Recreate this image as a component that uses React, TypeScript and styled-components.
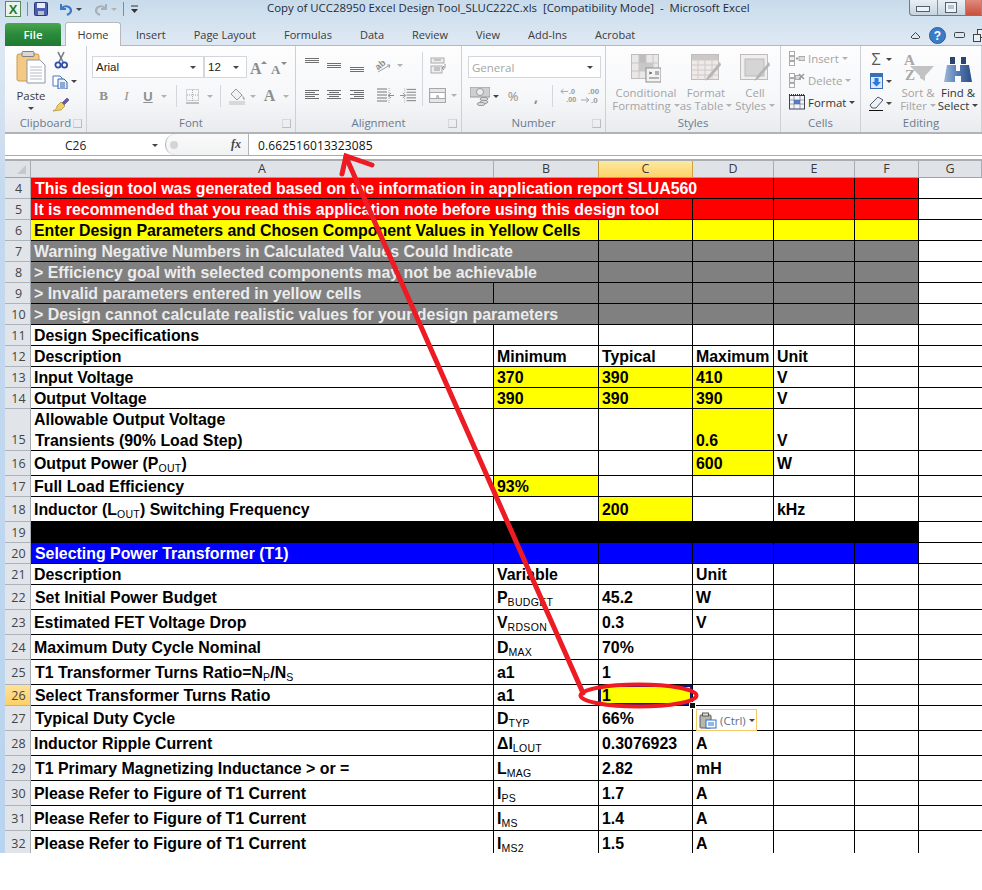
import React from 'react';
import styled, { createGlobalStyle } from 'styled-components';

const UI_FONT = '"Open Sans", "Noto Sans", sans-serif';
const COLS = '26px 463px 105px 94px 81px 81px 64px 1fr';

const GlobalStyle = createGlobalStyle`
  html, body { margin: 0; padding: 0; background: #fff; }
  #root { width: 982px; height: 890px; overflow: hidden; }
`;

const Page = styled.div`
  position: relative;
  width: 982px;
  height: 890px;
  background: #fff;
  font-family: ${UI_FONT};
`;

const Window = styled.div`
  height: 853px;
  overflow: hidden;
  background: linear-gradient(180deg, #c8dbeb 0, #dde8f3 40px, #c4d9ee 200px, #b9d4f0 100%);
`;

/* title bar */
const TitleBar = styled.div`
  display: flex;
  align-items: flex-start;
  height: 22px;
  padding-left: 5px;
`;
const Qat = styled.div`
  display: flex;
  align-items: center;
  width: 262px;
  height: 18px;
  gap: 3px;
`;
const QatSep = styled.span`
  width: 1px;
  height: 14px;
  margin: 0 3px;
  background: #7f8c99;
`;
const Title = styled.div`
  font-size: 11.4px;
  line-height: 16px;
  color: #1e2a38;
  white-space: pre;
`;
const WinControls = styled.div`
  display: flex;
  margin-left: auto;
  margin-top: -1px;
  width: 72px;
  height: 15px;
  border: 1px solid #6d7a88;
  border-right: 0;
  border-radius: 0 0 0 4px;
  background: linear-gradient(180deg, #e9eff5, #c5d3e0);
`;
const WinBtn = styled.div<{ $close?: boolean }>`
  display: flex;
  align-items: center;
  justify-content: center;
  width: ${p => (p.$close ? '16px' : '28px')};
  border-right: 1px solid #8593a1;
  background: ${p => (p.$close ? 'linear-gradient(180deg,#e08a7c,#c9503e)' : 'transparent')};
`;

/* tabs */
const TabBar = styled.div`
  display: flex;
  align-items: flex-end;
  height: 24px;
  padding-left: 5px;
  margin-bottom: -1px;
  position: relative;
  z-index: 1;
`;
const FileTab = styled.div`
  width: 56px;
  height: 23px;
  line-height: 23px;
  text-align: center;
  color: #fff;
  font-size: 11.5px;
  font-weight: 600;
  border-radius: 3px 3px 0 0;
  background: linear-gradient(180deg, #4aa64e 0, #2a8a3a 50%, #1e7a30 100%);
  margin-right: 4px;
`;
const Tab = styled.div<{ $active?: boolean }>`
  height: 23px;
  line-height: 23px;
  padding: 0 14px;
  font-size: 11px;
  white-space: nowrap;
  color: #3b3b3b;
  box-sizing: border-box;
  ${p => p.$active && `
    width: 56px;
    height: 24px;
    padding: 0;
    text-align: center;
    margin-right: 1px;
    background: linear-gradient(180deg, #fff, #fbfcfd);
    border: 1px solid #b5b9be;
    border-bottom: 0;
    border-radius: 3px 3px 0 0;
  `}
`;
const TabTools = styled.div`
  display: flex;
  align-items: center;
  gap: 8px;
  margin-left: auto;
  height: 22px;
  margin-right: -2px;
`;

/* ribbon */
const Body = styled.div`
  margin-left: 5px;
  background: #fff;
`;
const Ribbon = styled.div`
  display: flex;
  height: 86px;
  border-top: 1px solid #b5b9be;
  background: linear-gradient(180deg, #fdfdfe 0, #f6f7f9 60%, #e9ebee 100%);
`;
const Group = styled.div<{ $w: number }>`
  flex: none;
  display: flex;
  flex-direction: column;
  width: ${p => p.$w}px;
  box-sizing: border-box;
  border-right: 1px solid #cdd1d6;
`;
const GroupBody = styled.div<{ $pad?: string }>`
  flex: 1;
  display: flex;
  padding: ${p => p.$pad || '0'};
  min-height: 0;
`;
const GroupLabel = styled.div`
  position: relative;
  height: 16px;
  line-height: 13px;
  text-align: center;
  font-size: 11.4px;
  color: #6a7a8e;
`;
const Launcher = styled.span`
  position: absolute;
  right: 4px;
  top: 3px;
  width: 7px;
  height: 7px;
  border: 1px solid #b9bdc3;
  border-top-color: #d5d8dc;
  border-left-color: #d5d8dc;
`;
const Stack = styled.div<{ $gap?: number; $w?: number; $pt?: number }>`
  flex: none;
  display: flex;
  flex-direction: column;
  gap: ${p => p.$gap || 0}px;
  padding-top: ${p => p.$pt || 0}px;
  ${p => p.$w && `width: ${p.$w}px;`}
`;
const ToolRow = styled.div<{ $h?: number }>`
  display: flex;
  align-items: center;
  height: ${p => p.$h || 22}px;
`;
const Tool = styled.div<{ $w: number; $look?: 'bold' | 'italic' | 'under' | 'big' | 'comma' | 'sigma' }>`
  flex: none;
  display: flex;
  align-items: center;
  justify-content: center;
  width: ${p => p.$w}px;
  height: 100%;
  font-size: 13px;
  color: #8e8e8e;
  ${p => p.$look === 'bold' && 'font-weight: 700; font-family: "Liberation Serif", serif;'}
  ${p => p.$look === 'italic' && 'font-style: italic; font-family: "Liberation Serif", serif;'}
  ${p => p.$look === 'under' && 'font-weight: 700; text-decoration: underline; font-family: "Liberation Sans", sans-serif;'}
  ${p => p.$look === 'big' && 'font-weight: 700; font-size: 16px; font-family: "Liberation Serif", serif;'}
  ${p => p.$look === 'comma' && 'font-weight: 700; font-size: 14px;'}
  ${p => p.$look === 'sigma' && 'font-size: 16px; color: #555;'}
`;
const ToolSep = styled.span<{ $h?: number }>`
  width: 1px;
  height: ${p => p.$h || 22}px;
  background: #d3d6da;
`;
const Caret = styled.span<{ $dark?: boolean }>`
  flex: none;
  width: 0;
  height: 0;
  border: 3px solid transparent;
  border-bottom: 0;
  border-top: 3px solid ${p => (p.$dark ? '#444' : '#b2b2b2')};
`;
const Combo = styled.div<{ $w: number; $muted?: boolean }>`
  flex: none;
  display: flex;
  align-items: center;
  justify-content: space-between;
  width: ${p => p.$w}px;
  height: 22px;
  box-sizing: border-box;
  padding: 0 7px 0 3px;
  background: #fff;
  border: 1px solid #d3d7dc;
  font-size: 11.5px;
  color: ${p => (p.$muted ? '#a6a6a6' : '#222')};
  font-family: ${p => (p.$muted ? UI_FONT : '"Liberation Sans", sans-serif')};
`;
const PasteButton = styled.div`
  display: flex;
  flex-direction: column;
  align-items: center;
  width: 36px;
  font-size: 11.4px;
  color: #3b3b3b;
  line-height: 15px;
  gap: 4px;
`;
const BigButton = styled.div<{ $w: number; $muted?: boolean }>`
  flex: none;
  display: flex;
  flex-direction: column;
  align-items: center;
  width: ${p => p.$w}px;
  padding-top: 4px;
  font-size: 11.4px;
  line-height: 13px;
  white-space: nowrap;
  color: ${p => (p.$muted ? '#a4a4a4' : '#333')};
`;
const BigIconSlot = styled.div`
  height: 33px;
  margin-bottom: 3px;
  display: flex;
  align-items: flex-end;
`;
const LabelLine = styled.span`
  display: flex;
  align-items: center;
  gap: 3px;
`;
const CellsRow = styled.div<{ $muted?: boolean }>`
  display: flex;
  align-items: center;
  gap: 3px;
  height: 22px;
  font-size: 11.4px;
  color: ${p => (p.$muted ? '#a4a4a4' : '#333')};
`;

/* formula bar */
const FormulaBar = styled.div`
  display: flex;
  align-items: center;
  height: 24px;
  border-top: 2px solid #b0b4b9;
  border-bottom: 1px solid #a9adb2;
  box-sizing: border-box;
  background: #fff;
`;
const NameBox = styled.div`
  display: flex;
  align-items: center;
  width: 160px;
  height: 100%;
  box-sizing: border-box;
  padding: 2px 7px 0 60px;
  justify-content: space-between;
  font: 12px ${UI_FONT};
  color: #222;
`;
const Grip = styled.div`
  display: flex;
  align-items: center;
  width: 84px;
  height: 100%;
  box-sizing: border-box;
  padding-left: 4px;
  border: 1px solid #b0b4b9;
  border-width: 0 1px 0 1px;
  border-radius: 10px 0 0 10px;
  background: linear-gradient(180deg,#fafafa,#f1f2f3);
  justify-content: space-between;
  padding-right: 7px;
`;
const GripDot = styled.span`
  width: 8px;
  height: 8px;
  border-radius: 50%;
  background: #d2d4d7;
`;
const FxLabel = styled.span`
  font: italic bold 12px "Liberation Serif", serif;
  color: #444;
`;
const FormulaText = styled.div`
  padding-left: 9px;
  margin-top: 2px;
  font-size: 12px;
  letter-spacing: 0.1px;
  color: #111;
`;

/* sheet */
const SheetGap = styled.div`
  height: 3px;
  background: #fff;
  border-bottom: 2px solid #a9adb2;
`;
const HeaderRow = styled.div`
  display: grid;
  grid-template-columns: ${COLS};
  height: 17px;
  background: #dfe3e8;
  box-sizing: border-box;
  border-bottom: 1px solid #9ea3a9;
`;
const ColHead = styled.div<{ $on?: boolean }>`
  text-align: center;
  font-size: 12.5px;
  line-height: 16px;
  color: #3a3a3a;
  box-sizing: border-box;
  border-right: 1px solid ${p => (p.$on ? '#d0a040' : '#a8adb3')};
  ${p => p.$on && 'background: linear-gradient(180deg,#fee9a0,#fbd36a); border-left: 1px solid #d0a040; margin-left: -1px;'}
`;
const Corner = styled.div`
  position: relative;
  border-right: 1px solid #a8adb3;
  &::after {
    content: '';
    position: absolute;
    right: 4px;
    bottom: 3px;
    border-left: 9px solid transparent;
    border-bottom: 9px solid #c5c9ce;
  }
`;
const Row = styled.div<{ $h: number }>`
  display: grid;
  grid-template-columns: ${COLS};
  grid-template-rows: ${p => p.$h}px;
  height: ${p => p.$h}px;
`;
const RowHead = styled.div<{ $on?: boolean; $bottom?: boolean }>`
  display: flex;
  align-items: ${p => (p.$bottom ? 'flex-end' : 'center')};
  justify-content: center;
  box-sizing: border-box;
  font-size: 12.5px;
  line-height: 20px;
  color: #444;
  padding: 1px 0 0 2px;
  background: ${p => (p.$on ? 'linear-gradient(180deg,#fee29a,#fbd065)' : '#e1e5ea')};
  border-right: 1px solid #a8adb3;
  border-bottom: 1px solid #aeb3b9;
`;
const Cell = styled.div<{ $bg?: string; $fg?: string; $span?: number; $inset?: boolean; $noRight?: boolean }>`
  grid-column: span ${p => p.$span || 1};
  display: flex;
  align-items: flex-end;
  box-sizing: border-box;
  min-height: 0;
  white-space: pre;
  font: bold 15.9px/18px "Liberation Sans", Arial, sans-serif;
  padding-left: ${p => (p.$inset ? 4 : 3)}px;
  background: ${p => p.$bg || '#fff'};
  color: ${p => p.$fg || '#000'};
  border-bottom: 1px solid #000;
  border-right: ${p => (p.$noRight ? 0 : '1px solid #000')};
`;
const SelectedCell = styled(Cell)`
  position: relative;
  box-shadow: inset 0 0 0 2px #16168c;
  &::after {
    content: '';
    position: absolute;
    right: -4px;
    bottom: -4px;
    width: 5px;
    height: 5px;
    background: #111;
    border: 1px solid #fff;
  }
`;
const CellText = styled.span<{ $tall?: boolean }>`
  display: block;
  margin-bottom: ${p => (p.$tall ? 2 : 0)}px;
`;
const Sub = styled.span`
  font-size: 10.5px;
  line-height: 0;
  font-weight: 400;
  letter-spacing: 0.3px;
  position: relative;
  top: 3px;
`;
const Lines = styled.span`
  display: flex;
  flex-direction: column;
  line-height: 21px;
  margin-bottom: -1px;
`;
const LineIndent = styled.span`
  padding-left: 1px;
`;

/* overlays */
const PasteTag = styled.div`
  position: absolute;
  left: 696px;
  top: 709px;
  width: 61px;
  height: 22px;
  box-sizing: border-box;
  display: flex;
  align-items: center;
  gap: 3px;
  padding-left: 2px;
  background: #fff;
  border: 1px solid #f1cb66;
  font-size: 11.5px;
  color: #5d6f87;
`;
const Annotation = styled.svg`
  position: absolute;
  left: 0;
  top: 0;
  pointer-events: none;
`;

/* icons */
const IconPaste = () => (
  <svg width="30" height="34" viewBox="0 0 30 34">
    <rect x="1" y="4" width="22" height="27" rx="2" fill="#f4c983" stroke="#c99a52" />
    <rect x="6" y="1.5" width="12" height="5" rx="1" fill="#d8d8d8" stroke="#7f7f7f" />
    <path d="M11 10h13l5 5v18H11z" fill="#fff" stroke="#8c97a5" />
    <path d="M14 17h12M14 20h12M14 23h12M14 26h12M14 29h12" stroke="#b3bcc8" />
  </svg>
);
const IconCut = () => (
  <svg width="14" height="18" viewBox="0 0 14 18">
    <path d="M4 1l5 10M10 1L5 11" stroke="#6f7a88" strokeWidth="1.6" />
    <circle cx="4" cy="14" r="2.6" fill="none" stroke="#2d4da8" strokeWidth="1.8" />
    <circle cx="10.5" cy="14" r="2.6" fill="none" stroke="#2d4da8" strokeWidth="1.8" />
  </svg>
);
const IconCopy = () => (
  <svg width="16" height="14" viewBox="0 0 16 14">
    <path d="M1 1h7l2 2v8H1z" fill="#fff" stroke="#4a76b8" />
    <path d="M6 4h6l3 3v7H6z" fill="#e8f0fa" stroke="#2f63ad" />
    <path d="M8 8h5M8 10h5M8 12h5" stroke="#2f63ad" />
  </svg>
);
const IconBrush = () => (
  <svg width="18" height="16" viewBox="0 0 18 16">
    <path d="M10 7l5-5 2 2-5 5z" fill="#6a5aa8" stroke="#463a80" strokeWidth=".6" />
    <path d="M9 6l4 4-4 4-8 1c2-1 4-2 4-5z" fill="#f0d060" stroke="#a88a30" strokeWidth=".7" />
  </svg>
);
const IconGrow = ({ small }: { small?: boolean }) => (
  <svg width="20" height="20" viewBox="0 0 20 20">
    <text x="2" y="17" fontFamily="Liberation Serif" fontWeight="700" fontSize={small ? 13 : 16} fill="#8b8b8b">A</text>
    <path d={small ? 'M12 5h6l-3 3z' : 'M13 7h6l-3-3z'} fill="#8b8b8b" />
  </svg>
);
const IconBorders = () => (
  <svg width="14" height="15" viewBox="0 0 14 15">
    <rect x=".5" y=".5" width="12" height="11" fill="none" stroke="#aaa" strokeDasharray="1 1" />
    <path d="M6.500 1v11M1 6h12" stroke="#aaa" strokeDasharray="1 1" />
    <path d="M0 14h13" stroke="#888" />
  </svg>
);
const IconFill = () => (
  <svg width="17" height="17" viewBox="0 0 17 17">
    <path d="M7 1l6 6-5 5-6-6z" fill="#f2f2f2" stroke="#999" />
    <path d="M13 7c2 2 3 3 3 4s-2 1-2 0-1-3-1-4z" fill="#b0b0b0" />
    <rect x="0" y="13" width="16" height="4" fill="#d8d8d8" />
  </svg>
);
const IconLines = ({ widths, top, x = 0 }: { widths: number[]; top: number; x?: number[] | number }) => (
  <svg width="16" height="22" viewBox="0 0 16 22">
    {widths.map((w, i) => (
      <rect key={i} x={Array.isArray(x) ? x[i] : x} y={top + i * 2} width={w} height="1" fill="#6f6f6f" />
    ))}
  </svg>
);
const IconOrient = () => (
  <svg width="18" height="16" viewBox="0 0 18 16">
    <text x="1" y="11" transform="rotate(-40 6 8)" fontFamily="Liberation Sans" fontWeight="700" fontSize="9" fill="#8a8a8a">ab</text>
    <path d="M4 15l12-7M16 8l-3 0M16 8l-1 3" stroke="#a0a0a0" fill="none" />
  </svg>
);
const IconIndent = ({ flip }: { flip?: boolean }) => (
  <svg width="17" height="15" viewBox="0 0 17 15" style={flip ? { transform: 'scaleX(-1)' } : undefined}>
    <path d="M0 7.500h5M3 5l3 2.500L3 10" stroke="#8a8a8a" fill="none" />
    <path d="M7 1h10M7 4h10M7 7h10M7 10h10M7 13h10" stroke="#777" />
    <path d="M5 0v15" stroke="#aaa" strokeDasharray="1 1" />
  </svg>
);
const IconWrap = () => (
  <svg width="17" height="17" viewBox="0 0 17 17">
    <rect x="1" y="1" width="13" height="5" fill="#eee" stroke="#aaa" />
    <rect x="1" y="9" width="11" height="7" fill="#eee" stroke="#aaa" />
    <path d="M4 3h7M4 11h6M4 13h6" stroke="#999" />
    <path d="M15 7v4h-2M14 9l-2 2 2 2" stroke="#999" fill="none" />
  </svg>
);
const IconMerge = () => (
  <svg width="17" height="15" viewBox="0 0 17 15">
    <rect x=".5" y=".5" width="16" height="14" fill="#e6e6e6" stroke="#a8a8a8" />
    <rect x="2" y="5" width="13" height="5" fill="#fff" />
    <path d="M.5 4.500h16M.5 10.500h16" stroke="#a8a8a8" />
    <text x="8.500" y="9.500" textAnchor="middle" fontFamily="Liberation Sans" fontSize="6" fill="#888">a</text>
  </svg>
);
const IconCurrency = () => (
  <svg width="20" height="19" viewBox="0 0 20 19">
    <rect x="0" y="0" width="20" height="10" fill="#cfcfcf" stroke="#9a9a9a" />
    <ellipse cx="10" cy="5" rx="3.500" ry="3.500" fill="#eee" stroke="#999" />
    <ellipse cx="14" cy="12" rx="4" ry="1.600" fill="#ddd" stroke="#999" />
    <ellipse cx="14" cy="15" rx="4" ry="1.600" fill="#ddd" stroke="#999" />
    <ellipse cx="11" cy="17" rx="4" ry="1.600" fill="#ddd" stroke="#999" />
  </svg>
);
const IconDecimal = ({ more }: { more?: boolean }) => (
  <svg width="22" height="18" viewBox="0 0 22 18" fontFamily="Liberation Sans" fontSize="8" fontWeight="700" fill="#9a9a9a">
    <text x={more ? 8 : 11} y="7">{more ? '.00' : '.0'}</text>
    <text x={more ? 11 : 8} y="16">{more ? '.0' : '.00'}</text>
    <path d={more ? 'M1 13h8M6 10.500l3 2.500-3 2.500' : 'M2 4h8M5 1.500L2 4l3 2.500'} stroke="#a5a5a5" fill="none" />
  </svg>
);
const IconCondFormat = () => (
  <svg width="30" height="29" viewBox="0 0 30 29">
    <rect x=".5" y=".5" width="27" height="24" fill="#ebe7e7" stroke="#bdbdbd" />
    <rect x="8" y="1" width="7" height="8" fill="#bdbdbd" />
    <rect x="8" y="9" width="14" height="8" fill="#c8c8c8" />
    <path d="M8 1v24M15 1v24M22 1v24M1 9h27M1 17h27" stroke="#c5c5c5" />
    <rect x="15" y="14" width="15" height="14" fill="#f2f2f2" stroke="#8f8f8f" />
    <path d="M18 18l3 1-3 1M24 18h4M24 20h4M18 24h10" stroke="#707070" fill="none" />
  </svg>
);
const IconTableFmt = () => (
  <svg width="30" height="29" viewBox="0 0 30 29">
    <rect x=".5" y=".5" width="27" height="25" fill="#efe9e7" stroke="#c0bcbc" />
    <rect x="1" y="1" width="26" height="5" fill="#cdc8c8" />
    <path d="M7 1v25M14 1v25M21 1v25M1 6h27M1 11h27M1 16h27M1 21h27" stroke="#cfcaca" />
    <path d="M29 8L17 22l-3 5 5-3L30 11z" fill="#b4b4b4" />
  </svg>
);
const IconCellStyle = () => (
  <svg width="30" height="29" viewBox="0 0 30 29">
    <rect x=".5" y=".5" width="27" height="25" fill="#f1eeee" stroke="#c0bcbc" />
    <rect x="5" y="5" width="19" height="17" fill="#d5d5d5" stroke="#bbb" />
    <path d="M29 8L17 22l-3 5 5-3L30 11z" fill="#b4b4b4" />
  </svg>
);
const IconInsert = () => (
  <svg width="16" height="15" viewBox="0 0 16 15">
    <rect x="0.5" y=".5" width="5" height="4" fill="#fff" stroke="#aaa" />
    <rect x=".5" y="5.500" width="5" height="4" fill="#eee" stroke="#aaa" />
    <rect x=".5" y="10.500" width="5" height="4" fill="#fff" stroke="#aaa" />
    <path d="M7 7.500h2M8 6v3" stroke="#999" />
    <rect x="10" y="5.500" width="6" height="4" fill="#ddd" stroke="#aaa" />
  </svg>
);
const IconDelete = () => (
  <svg width="16" height="15" viewBox="0 0 16 15">
    <rect x="0.5" y=".5" width="5" height="4" fill="#fff" stroke="#aaa" />
    <rect x=".5" y="5.500" width="5" height="4" fill="#eee" stroke="#aaa" />
    <rect x=".5" y="10.500" width="5" height="4" fill="#fff" stroke="#aaa" />
    <rect x="6.500" y="2.500" width="5" height="4" fill="#ddd" stroke="#aaa" />
    <path d="M10 1l5 5M15 1l-5 5" stroke="#9a9a9a" strokeWidth="1.500" />
  </svg>
);
const IconFormat = () => (
  <svg width="16" height="16" viewBox="0 0 16 16">
    <rect x=".5" y="1.500" width="15" height="13.500" fill="#f2f6fb" stroke="#445" />
    <path d="M0 1h16" stroke="#333" strokeWidth="2" strokeDasharray="1 1" />
    <rect x="5" y="6" width="6" height="4" fill="#4a80d8" />
    <path d="M5 2v13M11 2v13M1 6h14M1 10h14" stroke="#667" strokeWidth=".6" />
  </svg>
);
const IconFillDown = () => (
  <svg width="13" height="16" viewBox="0 0 13 16">
    <rect x=".5" y=".5" width="12" height="15" fill="#dbe8f8" stroke="#3a6fb8" />
    <rect x="1" y="1" width="11" height="3" fill="#3a6fb8" />
    <path d="M4.500 5h4v4h2.500l-4.500 4.500L2 9h2.500z" fill="#2f78d8" />
  </svg>
);
const IconEraser = () => (
  <svg width="15" height="15" viewBox="0 0 15 15">
    <path d="M9 1l5 3-7 8H3L1 9z" fill="#eef2f7" stroke="#4d5a70" />
    <path d="M0 14.500h14" stroke="#111" />
  </svg>
);
const IconSort = () => (
  <svg width="31" height="31" viewBox="0 0 31 31" fontFamily="Liberation Serif" fontWeight="700" fontSize="15" fill="#a8a8a8">
    <text x="1" y="13">A</text>
    <text x="2" y="28">Z</text>
    <path d="M7 14h24l-9 10v5l-5-3v-2z" fill="#b8b8b8" opacity=".85" />
  </svg>
);
const IconFind = () => (
  <svg width="28" height="28" viewBox="0 0 28 28">
    <defs>
      <linearGradient id="bino" x1="0" x2="1" y1="0" y2="0">
        <stop offset="0" stopColor="#9db6da" />
        <stop offset=".5" stopColor="#567ab5" />
        <stop offset="1" stopColor="#2d4d85" />
      </linearGradient>
    </defs>
    <path d="M6 2h5v7H6zM17 2h5v7h-5z" fill="#2c436f" />
    <path d="M3 10h9v6h4v-6h9l3 17H17v-6h-6v6H0z" fill="url(#bino)" />
  </svg>
);
const IconClipTag = () => (
  <svg width="18" height="17" viewBox="0 0 18 17">
    <rect x="1" y="3" width="11" height="13" rx="1" fill="#b9b6ae" stroke="#5c5a56" />
    <rect x="3.500" y="1" width="6" height="3" fill="#ddd" stroke="#5c5a56" />
    <rect x="7" y="8" width="10" height="8" fill="#fff" stroke="#2a6fd0" />
    <path d="M9 11h6M9 13h6" stroke="#2a6fd0" />
  </svg>
);
const IconExcel = () => (
  <svg width="16" height="16" viewBox="0 0 16 16">
    <rect x=".5" y=".5" width="15" height="15" fill="#eaf3e8" stroke="#5a8a5a" />
    <text x="8" y="13" textAnchor="middle" fontFamily="Liberation Sans" fontWeight="700" fontSize="13" fill="#1d7a35">X</text>
  </svg>
);
const IconSave = () => (
  <svg width="14" height="14" viewBox="0 0 14 14">
    <rect x=".5" y=".5" width="13" height="13" rx="1" fill="#4a5fb0" stroke="#2d3a78" />
    <rect x="3" y="1" width="8" height="5" fill="#e9eef6" />
    <rect x="4" y="9" width="6" height="4" fill="#b8c0d0" />
  </svg>
);
const IconUndo = ({ muted }: { muted?: boolean }) => (
  <svg width="14" height="13" viewBox="0 0 14 13" style={muted ? { transform: 'scaleX(-1)' } : undefined}>
    <path d="M2 1v5h5" fill="none" stroke={muted ? '#a8b0b8' : '#3a78c8'} strokeWidth="2" />
    <path d="M3 5c3-3 9-2 9 3 0 2-2 3-4 4" fill="none" stroke={muted ? '#a8b0b8' : '#3a78c8'} strokeWidth="2.200" />
  </svg>
);
const IconQatMenu = () => (
  <svg width="9" height="10" viewBox="0 0 9 10">
    <path d="M1 2h7" stroke="#333" />
    <path d="M1 5h7L4.500 9z" fill="#333" />
  </svg>
);
const IconRibbonUp = () => (
  <svg width="11" height="9" viewBox="0 0 11 9">
    <path d="M1 6l4.500-4.500L10 6 8.500 7.500h-6z" fill="none" stroke="#444" />
  </svg>
);
const IconHelp = () => (
  <svg width="17" height="17" viewBox="0 0 17 17">
    <circle cx="8.500" cy="8.500" r="8" fill="#3b7cc9" stroke="#2a5c9c" />
    <text x="8.500" y="13" textAnchor="middle" fontFamily="Liberation Sans" fontWeight="700" fontSize="12" fill="#fff">?</text>
  </svg>
);

const Arrow = () => (
  <Annotation width="982" height="890" viewBox="0 0 982 890">
    <g fill="none" stroke="#ed1c24" strokeLinecap="round">
      <path d="M346 157L583 693" strokeWidth="5" />
      <path d="M342 174L346 156L372 165" strokeWidth="5" />
      <ellipse cx="638.500" cy="695.500" rx="58" ry="11" strokeWidth="4" />
    </g>
  </Annotation>
);

/* sheet data */
type C = { t?: React.ReactNode; bg?: string; fg?: string; span?: number; inset?: boolean; sel?: boolean };
type R = { n: number; h: number; cells: C[] };

const RED = '#ff0000';
const YEL = '#ffff00';
const GREY = '#808080';
const BLUE = '#0000ff';
const WHITE = '#ffffff';
const SOFT = '#ececec';

const fill = (bg: string, count: number): C[] => Array.from({ length: count }, () => ({ bg }));
const blanks = (count: number): C[] => fill(WHITE, count);
const v = (a: string, b: string) => (<>{a}<Sub>{b}</Sub></>);

const rows: R[] = [
  { n: 4, h: 21, cells: [{ t: 'This design tool was generated based on the information in application report SLUA560', bg: RED, fg: WHITE, span: 4, inset: true }, ...fill(RED, 2)] },
  { n: 5, h: 21, cells: [{ t: 'It is recommended that you read this application note before using this design tool', bg: RED, fg: WHITE, span: 3 }, ...fill(RED, 3)] },
  { n: 6, h: 21, cells: [{ t: 'Enter Design Parameters and Chosen Component Values in Yellow Cells', bg: YEL, span: 2 }, ...fill(YEL, 4)] },
  { n: 7, h: 21, cells: [{ t: 'Warning Negative Numbers in Calculated Values Could Indicate', bg: GREY, fg: SOFT, span: 2 }, ...fill(GREY, 4)] },
  { n: 8, h: 21, cells: [{ t: '> Efficiency goal with selected components may not be achievable', bg: GREY, fg: SOFT, span: 2 }, ...fill(GREY, 4)] },
  { n: 9, h: 21, cells: [{ t: '> Invalid parameters entered in yellow cells', bg: GREY, fg: SOFT }, ...fill(GREY, 5)] },
  { n: 10, h: 21, cells: [{ t: '> Design cannot calculate realistic values for your design parameters', bg: GREY, fg: SOFT, span: 2 }, ...fill(GREY, 4)] },
  { n: 11, h: 21, cells: [{ t: 'Design Specifications' }, ...blanks(5)] },
  { n: 12, h: 21, cells: [{ t: 'Description' }, { t: 'Minimum' }, { t: 'Typical' }, { t: 'Maximum' }, { t: 'Unit' }, {}] },
  { n: 13, h: 21, cells: [{ t: 'Input Voltage' }, { t: '370', bg: YEL }, { t: '390', bg: YEL }, { t: '410', bg: YEL }, { t: 'V' }, {}] },
  { n: 14, h: 21, cells: [{ t: 'Output Voltage' }, { t: '390', bg: YEL }, { t: '390', bg: YEL }, { t: '390', bg: YEL }, { t: 'V' }, {}] },
  { n: 15, h: 42, cells: [{ t: <Lines><span>Allowable Output Voltage</span><LineIndent>Transients (90% Load Step)</LineIndent></Lines> }, {}, {}, { t: '0.6', bg: YEL }, { t: 'V' }, {}] },
  { n: 16, h: 25, cells: [{ t: <>Output Power (P<Sub>OUT</Sub>)</> }, {}, {}, { t: '600', bg: YEL }, { t: 'W' }, {}] },
  { n: 17, h: 21, cells: [{ t: 'Full Load Efficiency' }, { t: '93%', bg: YEL }, {}, {}, {}, {}] },
  { n: 18, h: 25, cells: [{ t: <>Inductor (L<Sub>OUT</Sub>) Switching Frequency</> }, {}, { t: '200', bg: YEL }, {}, { t: 'kHz' }, {}] },
  { n: 19, h: 21, cells: [{ bg: '#000', span: 6 }] },
  { n: 20, h: 21, cells: [{ t: 'Selecting Power Transformer (T1)', bg: BLUE, fg: WHITE, inset: true }, ...fill(BLUE, 5)] },
  { n: 21, h: 21, cells: [{ t: 'Description' }, { t: 'Variable' }, {}, { t: 'Unit' }, {}, {}] },
  { n: 22, h: 25, cells: [{ t: 'Set Initial Power Budget', inset: true }, { t: v('P', 'BUDGET') }, { t: '45.2' }, { t: 'W' }, {}, {}] },
  { n: 23, h: 25, cells: [{ t: 'Estimated FET Voltage Drop' }, { t: v('V', 'RDSON') }, { t: '0.3' }, { t: 'V' }, {}, {}] },
  { n: 24, h: 25, cells: [{ t: 'Maximum Duty Cycle Nominal' }, { t: v('D', 'MAX') }, { t: '70%' }, {}, {}, {}] },
  { n: 25, h: 25, cells: [{ t: <>T1 Transformer Turns Ratio=N<Sub>P</Sub>/N<Sub>S</Sub></>, inset: true }, { t: 'a1' }, { t: '1' }, {}, {}, {}] },
  { n: 26, h: 21, cells: [{ t: 'Select Transformer Turns Ratio', inset: true }, { t: 'a1' }, { t: '1', bg: YEL, sel: true }, {}, {}, {}] },
  { n: 27, h: 25, cells: [{ t: 'Typical Duty Cycle', inset: true }, { t: v('D', 'TYP') }, { t: '66%' }, {}, {}, {}] },
  { n: 28, h: 25, cells: [{ t: 'Inductor Ripple Current' }, { t: v('ΔI', 'LOUT') }, { t: '0.3076923' }, { t: 'A' }, {}, {}] },
  { n: 29, h: 25, cells: [{ t: 'T1 Primary Magnetizing Inductance > or =', inset: true }, { t: v('L', 'MAG') }, { t: '2.82' }, { t: 'mH' }, {}, {}] },
  { n: 30, h: 25, cells: [{ t: 'Please Refer to Figure of T1 Current' }, { t: v('I', 'PS') }, { t: '1.7' }, { t: 'A' }, {}, {}] },
  { n: 31, h: 25, cells: [{ t: 'Please Refer to Figure of T1 Current' }, { t: v('I', 'MS') }, { t: '1.4' }, { t: 'A' }, {}, {}] },
  { n: 32, h: 25, cells: [{ t: 'Please Refer to Figure of T1 Current' }, { t: v('I', 'MS2') }, { t: '1.5' }, { t: 'A' }, {}, {}] },
];

const SheetRow = ({ row }: { row: R }) => (
  <Row $h={row.h}>
    <RowHead $on={row.n === 26} $bottom={row.n === 15}>{row.n}</RowHead>
    {row.cells.map((c, i) => {
      const Comp = c.sel ? SelectedCell : Cell;
      return (
        <Comp key={i} $bg={c.bg} $fg={c.fg} $span={c.span} $inset={c.inset}>
          <CellText $tall={row.h === 25}>{c.t}</CellText>
        </Comp>
      );
    })}
    <Cell $noRight />
  </Row>
);

const App: React.FC = () => (
  <Page>
    <GlobalStyle />
    <Window>
      <TitleBar>
        <Qat>
          <IconExcel />
          <QatSep />
          <IconSave />
          <Tool $w={5} />
          <IconUndo />
          <Caret $dark />
          <Tool $w={6} />
          <IconUndo muted />
          <Caret />
          <QatSep />
          <IconQatMenu />
        </Qat>
        <Title>Copy of UCC28950 Excel Design Tool_SLUC222C.xls  [Compatibility Mode]  -  Microsoft Excel</Title>
        <WinControls>
          <WinBtn><svg width="14" height="8"><rect x=".5" y="2.500" width="13" height="5" fill="#eef2f6" stroke="#55606c" /></svg></WinBtn>
          <WinBtn><svg width="12" height="11"><rect x=".5" y=".5" width="11" height="10" fill="#eef2f6" stroke="#55606c" /><rect x="3" y="3" width="6" height="4" fill="#b7c3d0" /></svg></WinBtn>
          <WinBtn $close />
        </WinControls>
      </TitleBar>
      <TabBar>
        <FileTab>File</FileTab>
        <Tab $active>Home</Tab>
        {['Insert', 'Page Layout', 'Formulas', 'Data', 'Review', 'View', 'Add-Ins', 'Acrobat'].map(t => <Tab key={t}>{t}</Tab>)}
        <TabTools>
          <IconRibbonUp />
          <IconHelp />
          <svg width="11" height="6"><rect x=".5" y=".5" width="10" height="5" rx="1" fill="none" stroke="#444" /></svg>
          <svg width="11" height="13"><rect x="4.500" y=".5" width="6" height="8" fill="#e9eff5" stroke="#444" /><rect x=".5" y="5.500" width="7" height="7" fill="#e9eff5" stroke="#444" /></svg>
        </TabTools>
      </TabBar>
      <Body>
        <Ribbon>
          <Group $w={82}>
            <GroupBody $pad="4px 0 0 8px">
              <PasteButton>
                <IconPaste />
                <span>Paste</span>
                <Caret $dark />
              </PasteButton>
              <Stack $gap={3}>
                <ToolRow $h={19}><Tool $w={24}><IconCut /></Tool></ToolRow>
                <ToolRow $h={19}><Tool $w={22}><IconCopy /></Tool><Caret $dark /></ToolRow>
                <ToolRow $h={19}><Tool $w={24}><IconBrush /></Tool></ToolRow>
              </Stack>
            </GroupBody>
            <GroupLabel>Clipboard<Launcher /></GroupLabel>
          </Group>

          <Group $w={209}>
            <GroupBody $pad="10px 0 0 5px">
              <Stack $gap={7}>
                <ToolRow>
                  <Combo $w={112}>Arial<Caret $dark /></Combo>
                  <Combo $w={43}>12<Caret $dark /></Combo>
                  <Tool $w={21}><IconGrow /></Tool>
                  <Tool $w={21}><IconGrow small /></Tool>
                </ToolRow>
                <ToolRow>
                  <Tool $w={23} $look="bold">B</Tool>
                  <Tool $w={23} $look="italic">I</Tool>
                  <Tool $w={20} $look="under">U</Tool>
                  <Tool $w={12}><Caret /></Tool>
                  <Tool $w={12}><ToolSep /></Tool>
                  <Tool $w={22}><IconBorders /></Tool>
                  <Tool $w={11}><Caret /></Tool>
                  <Tool $w={11}><ToolSep /></Tool>
                  <Tool $w={22}><IconFill /></Tool>
                  <Tool $w={9}><Caret /></Tool>
                  <Tool $w={25} $look="big">A</Tool>
                  <Tool $w={8}><Caret /></Tool>
                </ToolRow>
              </Stack>
            </GroupBody>
            <GroupLabel>Font<Launcher /></GroupLabel>
          </Group>

          <Group $w={166}>
            <GroupBody $pad="6px 0 0 6px">
              <Stack $gap={6}>
                <ToolRow $h={26}>
                  <Tool $w={22}><IconLines widths={[14, 14, 14]} top={4} /></Tool>
                  <Tool $w={22}><IconLines widths={[14, 14, 14]} top={9} /></Tool>
                  <Tool $w={24}><IconLines widths={[14, 14, 14]} top={13} /></Tool>
                  <Tool $w={26}><IconOrient /></Tool>
                  <Tool $w={8}><Caret /></Tool>
                  <Tool $w={18} />
                </ToolRow>
                <ToolRow>
                  <Tool $w={22}><IconLines widths={[14, 10, 14, 10, 14]} top={6} /></Tool>
                  <Tool $w={22}><IconLines widths={[14, 10, 14, 10, 14]} x={[0, 2, 0, 2, 0]} top={6} /></Tool>
                  <Tool $w={24}><IconLines widths={[14, 10, 14, 10, 14]} x={[0, 4, 0, 4, 0]} top={6} /></Tool>
                  <Tool $w={30}><IconIndent flip /></Tool>
                  <Tool $w={16}><IconIndent /></Tool>
                  <Tool $w={6} />
                </ToolRow>
              </Stack>
              <Stack $pt={0}><ToolSep $h={54} /></Stack>
              <Stack $gap={6}>
                <ToolRow $h={26}><Tool $w={30}><IconWrap /></Tool></ToolRow>
                <ToolRow><Tool $w={28}><IconMerge /></Tool><Caret /></ToolRow>
              </Stack>
            </GroupBody>
            <GroupLabel>Alignment<Launcher /></GroupLabel>
          </Group>

          <Group $w={144}>
            <GroupBody $pad="10px 0 0 6px">
              <Stack $gap={7}>
                <ToolRow><Combo $w={133} $muted>General<Caret $dark /></Combo></ToolRow>
                <ToolRow>
                  <Tool $w={24}><IconCurrency /></Tool>
                  <Tool $w={8}><Caret $dark /></Tool>
                  <Tool $w={26}>%</Tool>
                  <Tool $w={20} $look="comma">,</Tool>
                  <Tool $w={13}><ToolSep /></Tool>
                  <Tool $w={20}><IconDecimal /></Tool>
                  <Tool $w={24}><IconDecimal more /></Tool>
                </ToolRow>
              </Stack>
            </GroupBody>
            <GroupLabel>Number<Launcher /></GroupLabel>
          </Group>

          <Group $w={175}>
            <GroupBody>
              <BigButton $w={80} $muted>
                <BigIconSlot><IconCondFormat /></BigIconSlot>
                <span>Conditional</span>
                <LabelLine>Formatting<Caret /></LabelLine>
              </BigButton>
              <BigButton $w={40} $muted>
                <BigIconSlot><IconTableFmt /></BigIconSlot>
                <span>Format</span>
                <LabelLine>as Table<Caret /></LabelLine>
              </BigButton>
              <BigButton $w={58} $muted>
                <BigIconSlot><IconCellStyle /></BigIconSlot>
                <span>Cell</span>
                <LabelLine>Styles<Caret /></LabelLine>
              </BigButton>
            </GroupBody>
            <GroupLabel>Styles</GroupLabel>
          </Group>

          <Group $w={80}>
            <GroupBody $pad="1px 0 0 8px">
              <Stack>
                <CellsRow $muted><IconInsert /><span>Insert</span><Caret /></CellsRow>
                <CellsRow $muted><IconDelete /><span>Delete</span><Caret /></CellsRow>
                <CellsRow><IconFormat /><span>Format</span><Caret $dark /></CellsRow>
              </Stack>
            </GroupBody>
            <GroupLabel>Cells</GroupLabel>
          </Group>

          <Group $w={121}>
            <GroupBody $pad="0 0 0 5px">
              <Stack $w={32} $pt={2}>
                <ToolRow><Tool $w={20} $look="sigma">Σ</Tool><Caret $dark /></ToolRow>
                <ToolRow><Tool $w={20}><IconFillDown /></Tool><Caret $dark /></ToolRow>
                <ToolRow><Tool $w={20}><IconEraser /></Tool><Caret $dark /></ToolRow>
              </Stack>
              <BigButton $w={40} $muted>
                <BigIconSlot><IconSort /></BigIconSlot>
                <span>Sort &amp;</span>
                <LabelLine>Filter<Caret /></LabelLine>
              </BigButton>
              <BigButton $w={40}>
                <BigIconSlot><IconFind /></BigIconSlot>
                <span>Find &amp;</span>
                <LabelLine>Select<Caret $dark /></LabelLine>
              </BigButton>
            </GroupBody>
            <GroupLabel>Editing</GroupLabel>
          </Group>
        </Ribbon>

        <FormulaBar>
          <NameBox>C26<Caret $dark /></NameBox>
          <Grip><GripDot /><FxLabel>fx</FxLabel></Grip>
          <FormulaText>0.662516013323085</FormulaText>
        </FormulaBar>
        <SheetGap />
        <HeaderRow>
          <Corner />
          {['A', 'B', 'C', 'D', 'E', 'F', 'G'].map(c => <ColHead key={c} $on={c === 'C'}>{c}</ColHead>)}
        </HeaderRow>
        {rows.map(r => <SheetRow key={r.n} row={r} />)}
      </Body>
    </Window>
    <Arrow />
    <PasteTag><IconClipTag /><span>(Ctrl)</span><Caret $dark /></PasteTag>
  </Page>
);

export default App;
